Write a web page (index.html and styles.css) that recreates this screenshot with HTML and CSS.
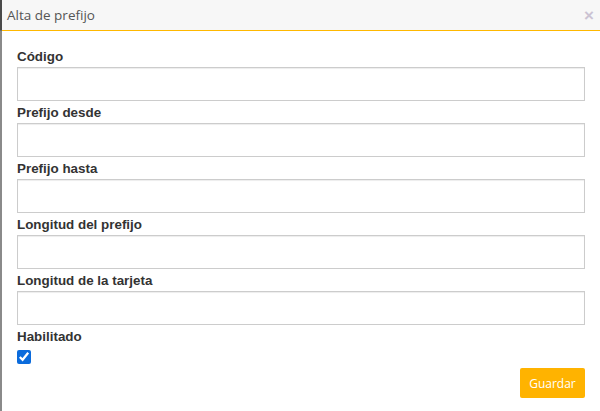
FILE: index.html
```html
<!DOCTYPE html>
<html lang="es">
<head>
<meta charset="utf-8">
<title>Alta de prefijo</title>
<link rel="stylesheet" href="styles.css">
</head>
<body>
<div class="page">
  <div class="backdrop-edge"></div>
  <div class="modal">
    <div class="modal-header">
      <span class="modal-title">Alta de prefijo</span>
      <span class="close">×</span>
    </div>
    <form class="modal-body">
      <div class="group">
        <label class="label">Código</label>
        <input class="input" type="text">
      </div>
      <div class="group">
        <label class="label">Prefijo desde</label>
        <input class="input" type="text">
      </div>
      <div class="group">
        <label class="label">Prefijo hasta</label>
        <input class="input" type="text">
      </div>
      <div class="group">
        <label class="label">Longitud del prefijo</label>
        <input class="input" type="text">
      </div>
      <div class="group">
        <label class="label">Longitud de la tarjeta</label>
        <input class="input" type="text">
      </div>
      <div class="group">
        <label class="label">Habilitado</label>
        <input class="check" type="checkbox" checked>
      </div>
      <div class="actions">
        <button class="btn" type="button">Guardar</button>
      </div>
    </form>
  </div>
</div>
</body>
</html>
```
FILE: styles.css
```css
html, body {
  margin: 0;
  padding: 0;
  background: #fff;
}
.page {
  display: flex;
  width: 600px;
  height: 411px;
  overflow: hidden;
}
.backdrop-edge {
  width: 2px;
  flex: none;
  background: linear-gradient(#4a4a4a 0, #4a4a4a 30px, #8a8a8a 31px, #8a8a8a 100%);
}
.modal {
  flex: 1;
  display: flex;
  flex-direction: column;
}
.modal-header {
  height: 30px;
  background: #f7f7f7;
  border-bottom: 1px solid #ffb800;
  display: flex;
  align-items: center;
  justify-content: space-between;
  padding: 0 6px 0 5px;
}
.modal-title {
  font-family: "Open Sans", sans-serif;
  font-size: 13.5px;
  color: #555;
  margin-top: -1px;
}
.close {
  font-family: "Liberation Sans", Arial, sans-serif;
  font-weight: bold;
  font-size: 17px;
  color: #cbc3d3;
  line-height: 1;
}
.modal-body {
  padding: 17px 15px 0 15px;
  display: flex;
  flex-direction: column;
  gap: 3px;
  font-family: "Liberation Sans", Arial, sans-serif;
}
.group {
  display: flex;
  flex-direction: column;
  align-items: flex-start;
}
.label {
  font-size: 13.4px;
  font-weight: bold;
  color: #333;
  line-height: 18px;
  margin-bottom: 1px;
}
.input {
  box-sizing: border-box;
  width: 100%;
  height: 34px;
  margin: 0;
  border: 1px solid #ccc;
  border-radius: 0;
  box-shadow: inset 0 1px 1px rgba(0,0,0,.075);
  background: #fff;
  outline: none;
}
.check {
  width: 14px;
  height: 14px;
  margin: 3px 0 0 0;
  accent-color: #0b6bdc;
}
.actions {
  display: flex;
  justify-content: flex-end;
  margin-top: 1px;
}
.btn {
  width: 65px;
  height: 30px;
  border: none;
  border-radius: 2px;
  background: #ffb300;
  color: #fff;
  font-family: "Open Sans", sans-serif;
  font-size: 12px;
  padding: 0;
}
```
